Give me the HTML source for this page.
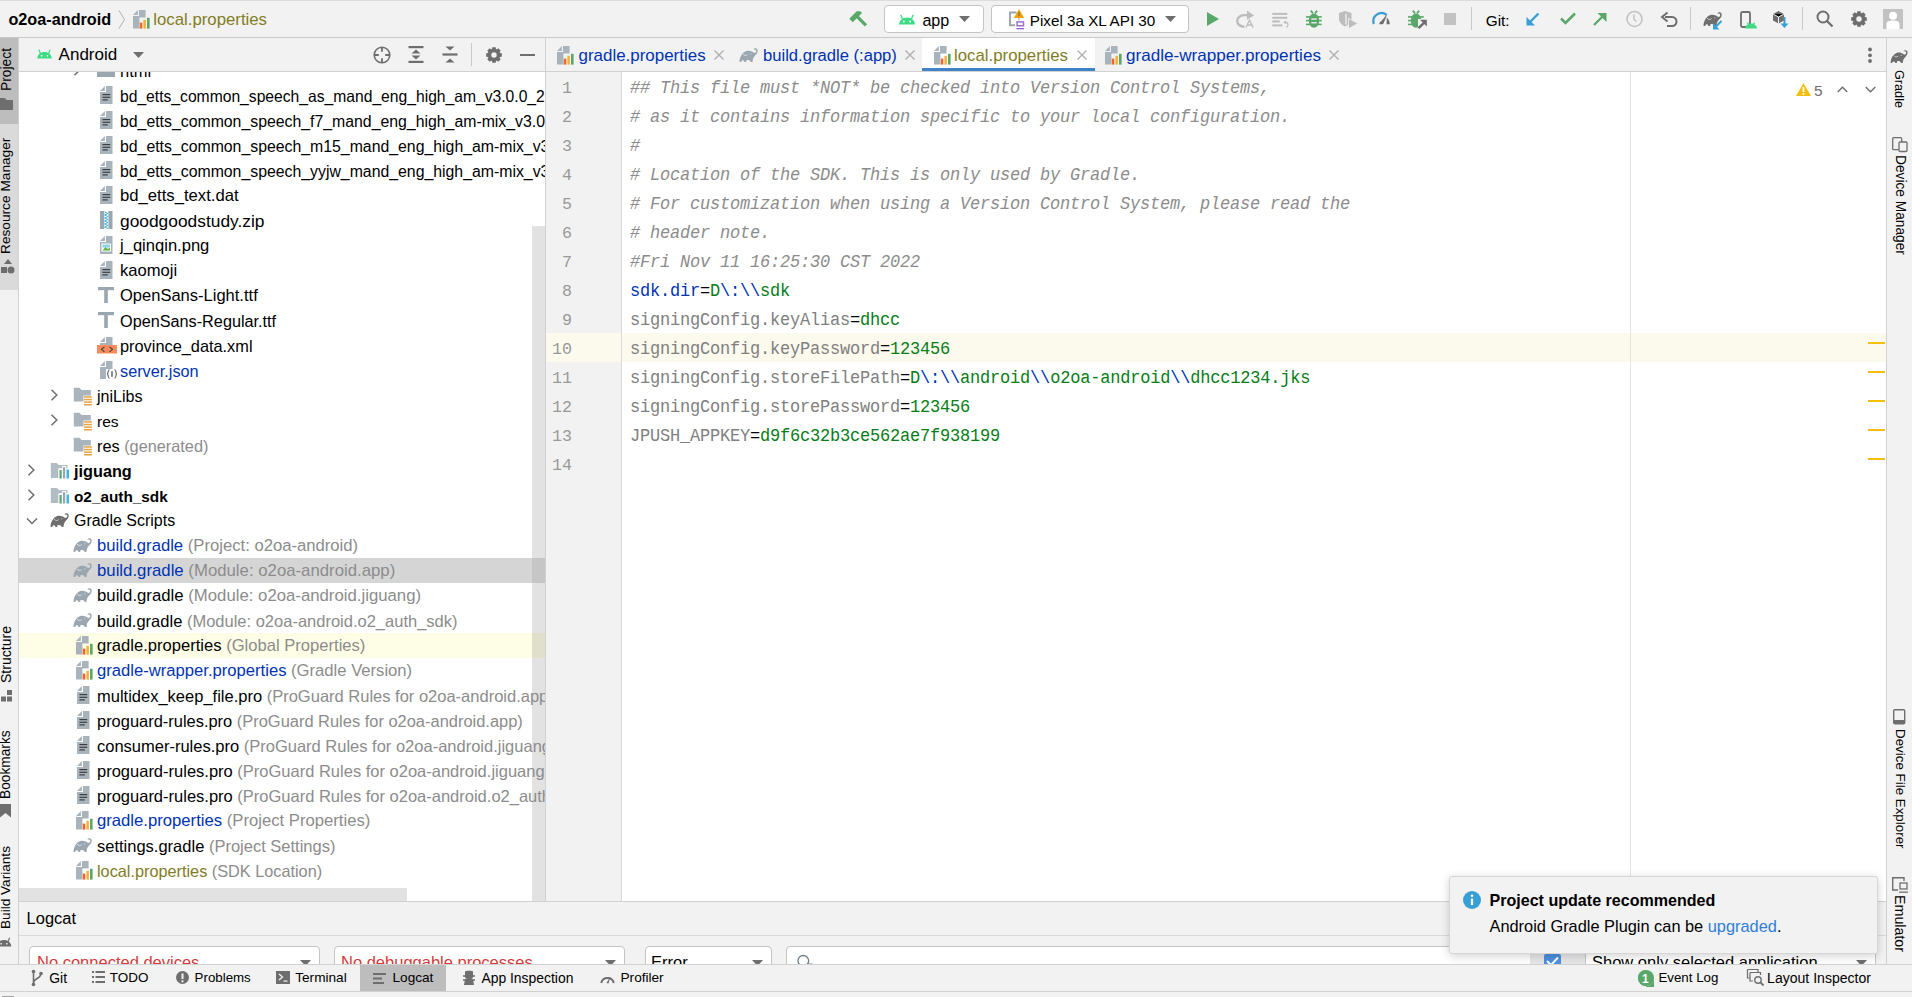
<!DOCTYPE html>
<html><head><meta charset="utf-8">
<style>
*{margin:0;padding:0;box-sizing:border-box}
html,body{width:1912px;height:997px;overflow:hidden;background:#f2f2f2;font-family:"Liberation Sans",sans-serif;font-size:17px;color:#000}
.a{position:absolute}
.t{position:absolute;white-space:nowrap}
svg{position:absolute;overflow:visible}
.vt{position:absolute;white-space:nowrap;transform-origin:0 0;font-family:"Liberation Sans",sans-serif}
</style></head><body>
<!-- top toolbar -->
<div class="a" style="left:0;top:0;width:1912px;height:1px;background:#dcdcdc"></div>
<div class="a" style="left:0;top:37px;width:1912px;height:1px;background:#c9c9c9"></div>
<!-- left strip -->
<div class="a" style="left:0;top:38px;width:18px;height:86px;background:#bdbdbd"></div>
<div class="a" style="left:0;top:124px;width:18px;height:166px;background:#dadada"></div>
<div class="a" style="left:18px;top:38px;width:1px;height:926px;background:#d1d1d1"></div>
<!-- right strip -->
<div class="a" style="left:1886px;top:38px;width:1px;height:926px;background:#d1d1d1"></div>
<!-- project panel header border -->
<div class="a" style="left:19px;top:71px;width:1867px;height:1px;background:#d1d1d1"></div>
<!-- tree bg -->
<div class="a" style="left:19px;top:72px;width:526px;height:829px;background:#fff"></div>
<!-- panel separator -->
<div class="a" style="left:545px;top:38px;width:1px;height:863px;background:#d1d1d1"></div>
<!-- editor gutter -->
<div class="a" style="left:546px;top:72px;width:75px;height:829px;background:#f2f2f2"></div>
<div class="a" style="left:621px;top:72px;width:1px;height:829px;background:#d9d9d9"></div>
<!-- code bg -->
<div class="a" style="left:622px;top:72px;width:1264px;height:829px;background:#fff"></div>
<!-- right margin -->
<div class="a" style="left:1630px;top:72px;width:1px;height:829px;background:#e4e4e4"></div>
<!-- bottom border of main area -->
<div class="a" style="left:19px;top:901px;width:1867px;height:1px;background:#d1d1d1"></div>
<div class="a" style="left:19px;top:935px;width:1867px;height:1px;background:#d9d9d9"></div>
<!-- bottom toolbar -->
<div class="a" style="left:0;top:964px;width:1912px;height:1px;background:#d1d1d1"></div>
<div class="a" style="left:0;top:991px;width:1912px;height:1px;background:#d1d1d1"></div>
<div class="t" style="left:8.4px;top:4.37px;font-size:16.24px;line-height:30px;height:30px;color:#000;font-family:'Liberation Sans';font-weight:bold">o2oa-android</div>
<svg style="left:118px;top:10px" width="8" height="19" viewBox="0 0 8 19"><path d="M1 0.5L6.5 9.5L1 18.5" stroke="#b0b0b0" stroke-width="1" fill="none"/></svg>
<svg style="left:133px;top:10px" width="17" height="19" viewBox="0 0 17 19"><path d="M6 0H12.6V7.4H6.4V18.6H0V6H6Z" fill="#a9b3bb"/><path d="M0 4.9L4.9 0V4.9Z" fill="#a9b3bb"/><rect x="6.8" y="12.6" width="2.5" height="6" fill="#f26522"/><rect x="10.4" y="9.8" width="2.5" height="8.8" fill="#f4af3d"/><rect x="14" y="7.8" width="2.6" height="10.8" fill="#59a869"/></svg>
<div class="t" style="left:153.3px;top:5.19px;font-size:16.77px;line-height:30px;height:30px;color:#827d25;font-family:'Liberation Sans'">local.properties</div>
<svg style="left:850px;top:10px" width="19" height="18" viewBox="0 0 19 18"><g transform="rotate(-45 9.5 9)"><rect x="8" y="5" width="3.2" height="13" fill="#59a869"/><path d="M2.5 1.5H13L15.5 4V6.5H2.5Z" fill="#59a869"/></g></svg>
<div class="a" style="left:884px;top:5px;width:100px;height:28px;background:#fff;border:1px solid #c4c4c4;border-radius:4px"></div>
<svg style="left:899px;top:14px" width="16" height="11" viewBox="0 0 16 11"><path d="M0 10.5C0.3 6.3 3.5 3.4 8 3.4C12.5 3.4 15.7 6.3 16 10.5Z" fill="#3ddc84"/><path d="M3.6 5.2L1.8 0.8M12.4 5.2L14.2 0.8" stroke="#3ddc84" stroke-width="1.3"/><circle cx="4.8" cy="7.5" r="0.9" fill="#fff"/><circle cx="11.2" cy="7.5" r="0.9" fill="#fff"/></svg>
<div class="t" style="left:922.4px;top:5.42px;font-size:16.11px;line-height:30px;height:30px;color:#000;font-family:'Liberation Sans'">app</div>
<svg style="left:959px;top:16px" width="11" height="6" viewBox="0 0 11 6"><path d="M0 0H11L5.5 6Z" fill="#6e6e6e"/></svg>
<div class="a" style="left:991px;top:5px;width:198px;height:28px;background:#fff;border:1px solid #c4c4c4;border-radius:4px"></div>
<svg style="left:1008px;top:8px" width="18" height="22" viewBox="0 0 18 22"><path d="M8.5 4.5H2V17.2H7" stroke="#9aa7b0" stroke-width="1.9" fill="none"/><path d="M11 1L16.2 10H5.8Z" fill="#f0a30a"/><rect x="10.4" y="4" width="1.2" height="4.2" fill="#8a6d3b"/><rect x="10.4" y="10" width="1.1" height="2.3" fill="#9aa7b0"/><rect x="9.1" y="13.9" width="6.4" height="3.9" stroke="#9c6fd0" stroke-width="1.5" fill="none"/><rect x="8.4" y="20" width="7.6" height="1.3" fill="#8e5fc8"/></svg>
<div class="t" style="left:1029.8px;top:5.73px;font-size:15.22px;line-height:30px;height:30px;color:#000;font-family:'Liberation Sans'">Pixel 3a XL API 30</div>
<svg style="left:1165px;top:16px" width="11" height="6" viewBox="0 0 11 6"><path d="M0 0H11L5.5 6Z" fill="#6e6e6e"/></svg>
<svg style="left:1207px;top:12px" width="12" height="14" viewBox="0 0 12 14"><path d="M0 0L12 7L0 14Z" fill="#59a869"/></svg>
<svg style="left:1236px;top:10px" width="20" height="20" viewBox="0 0 20 20"><path d="M11.5 5.1H8C4 5.1 1.2 8 1.2 11C1.2 14 4 16.7 8.4 16.7" stroke="#bdbdbd" stroke-width="2.4" fill="none"/><path d="M11 0.4L18.1 5.4L11 9.8Z" fill="#bdbdbd"/><path d="M10 17.6L13.5 10.1L17.1 17.6M11.3 15H15.7" stroke="#bdbdbd" stroke-width="1.3" fill="none"/></svg>
<svg style="left:1272px;top:12px" width="18" height="18" viewBox="0 0 18 18"><rect x="0.3" y="0.9" width="15" height="2" fill="#bdbdbd"/><rect x="0.3" y="4.8" width="15" height="2" fill="#bdbdbd"/><rect x="0.3" y="8.4" width="7.5" height="2.1" fill="#bdbdbd"/><rect x="0.3" y="12.4" width="10.2" height="2" fill="#bdbdbd"/><path d="M12.5 10.4C15 9.8 16.5 11.5 15.8 13.5L14.5 15.6" stroke="#bdbdbd" stroke-width="1.3" fill="none"/><path d="M11.2 10.4L14 8.5L14 12.3Z" fill="#bdbdbd"/></svg>
<svg style="left:1306px;top:10px" width="16" height="18" viewBox="0 0 16 18"><ellipse cx="8" cy="10.6" rx="5.2" ry="7.2" fill="#59a869"/><path d="M4.8 0.6L7 3.4M11.2 0.6L9 3.4" stroke="#59a869" stroke-width="1.7"/><rect x="0" y="6.1" width="15.7" height="1.6" fill="#59a869"/><rect x="0" y="9.8" width="15.7" height="1.6" fill="#59a869"/><rect x="0" y="13.6" width="15.7" height="1.6" fill="#59a869"/><rect x="5.3" y="8.4" width="5.4" height="1.3" fill="#f2f2f2"/><rect x="5.3" y="12.1" width="5.4" height="1.3" fill="#f2f2f2"/></svg>
<svg style="left:1338px;top:10px" width="20" height="20" viewBox="0 0 20 20"><path d="M1 3L6.8 1L13.5 3V8.5C13.5 12 11 14.5 7 16.5C3 14.5 1 12 1 8.5Z" fill="#bdbdbd"/><path d="M8 4V14.5" stroke="#f2f2f2" stroke-width="1.3"/><path d="M10.5 8.2L19.8 13.5L10.5 18.8Z" fill="#bdbdbd" stroke="#f2f2f2" stroke-width="0.8"/></svg>
<svg style="left:1372px;top:13px" width="20" height="12" viewBox="0 0 20 12"><path d="M1.8 11A8.2 8.2 0 0 1 14.6 1.8" stroke="#389fd6" stroke-width="2.3" fill="none"/><path d="M7.4 11.2C7.2 9.5 8.2 8.6 9.2 8.2L15.5 0.8L11.6 10.2C11.2 11 10.4 11.2 10 11.2Z" fill="#6e6e6e"/><path d="M14.8 4.5C16.8 6.5 17.8 9 17.8 11.2H14.6Z" fill="#6e6e6e"/></svg>
<svg style="left:1408px;top:10px" width="20" height="20" viewBox="0 0 20 20"><clipPath id="adc"><path d="M0 0H20V9H10V20H0Z"/></clipPath><g clip-path="url(#adc)"><ellipse cx="8" cy="10.6" rx="5.2" ry="7.2" fill="#59a869"/><path d="M4.8 0.6L7 3.4M11.2 0.6L9 3.4" stroke="#59a869" stroke-width="1.7"/><rect x="0" y="6.1" width="15.7" height="1.6" fill="#59a869"/><rect x="0" y="9.8" width="15.7" height="1.6" fill="#59a869"/><rect x="0" y="13.6" width="15.7" height="1.6" fill="#59a869"/></g><path d="M10.5 18.2L17 11.8" stroke="#6e6e6e" stroke-width="2.4"/><path d="M12 9.8H18.8V16.6Z" fill="#6e6e6e"/></svg>
<div class="a" style="left:1444px;top:13px;width:12px;height:12px;background:#c2c2c2;"></div>
<div class="a" style="left:1471px;top:7px;width:1px;height:23px;background:#c9c9c9;"></div>
<div class="t" style="left:1485.7px;top:5.67px;font-size:15.37px;line-height:30px;height:30px;color:#000;font-family:'Liberation Sans'">Git:</div>
<svg style="left:1526px;top:12px" width="14" height="14" viewBox="0 0 14 14"><path d="M12.5 1.5L3 11" stroke="#389fd6" stroke-width="2.4"/><path d="M0.5 5V13.5H9Z" fill="#389fd6"/></svg>
<svg style="left:1560px;top:12px" width="16" height="13" viewBox="0 0 16 13"><path d="M1 6.5L5.5 11L15 1.5" stroke="#59a869" stroke-width="2.5" fill="none"/></svg>
<svg style="left:1593px;top:12px" width="14" height="14" viewBox="0 0 14 14"><path d="M1 13L10.5 3.5" stroke="#59a869" stroke-width="2.3"/><path d="M4.5 1H13.5V10Z" fill="#59a869"/></svg>
<svg style="left:1626px;top:10px" width="17" height="18" viewBox="0 0 17 18"><circle cx="8.5" cy="9" r="7.5" stroke="#c2c2c2" stroke-width="1.6" fill="none"/><path d="M8 4.5V9.5L10.5 11.5" stroke="#c2c2c2" stroke-width="1.5" fill="none"/></svg>
<svg style="left:1661px;top:11px" width="17" height="16" viewBox="0 0 17 16"><path d="M4 6H11A4.5 4.5 0 0 1 11 15H6" stroke="#6e6e6e" stroke-width="2" fill="none"/><path d="M6.5 1.5L1 6L6.5 10.5" stroke="#6e6e6e" stroke-width="2" fill="none"/></svg>
<div class="a" style="left:1690px;top:7px;width:1px;height:23px;background:#c9c9c9;"></div>
<svg style="left:1703px;top:12px" width="19" height="14" viewBox="0 0 18.5 14"><path d="M0.3 14C0.2 9.5 2.5 5 6.5 3.2C9.5 2.2 12 3 14.2 4.6C15.5 5.4 17 4.6 17 3C17 1.6 15.6 1.2 14.2 1.6C14.6 0.2 17 -0.3 18.1 1.2C18.9 2.5 18.4 5 16.8 6.6C15.2 8.2 13.6 9.6 13.3 14H11.5C11.1 12.4 9.4 11.4 7.2 12.2L6.9 14H5.3C4.8 12.2 3 11.9 2.2 13L2 14Z" fill="#6e6e6e"/><path d="M3.6 5.8C4.8 7.8 7 8 8.4 6.6" stroke="#fff" stroke-width="0.8" fill="none" opacity="0.75"/><circle cx="11.6" cy="5.8" r="0.6" fill="#fff" opacity="0.6"/></svg>
<svg style="left:1713px;top:20px" width="10" height="10" viewBox="0 0 10 10"><path d="M8.5 1L3 6.5" stroke="#389fd6" stroke-width="2"/><path d="M0 3V9.5H6.5Z" fill="#389fd6"/></svg>
<svg style="left:1740px;top:11px" width="16" height="18" viewBox="0 0 16 18"><rect x="1" y="1" width="9" height="15" rx="1.5" stroke="#6e6e6e" stroke-width="1.8" fill="none"/><path d="M5 17.5C5.5 14 8 12.5 11 12.5C14 12.5 16.5 14 17 17.5Z" fill="#3ddc84"/><path d="M8.5 13.3L7.3 11.5M13.5 13.3L14.7 11.5" stroke="#3ddc84" stroke-width="1.2"/></svg>
<svg style="left:1772px;top:10px" width="20" height="20" viewBox="0 0 20 20"><path d="M1 4L6.5 1L12 4V10.5L6.5 13.5L1 10.5Z" fill="#6e6e6e"/><path d="M1 4L6.5 7L12 4M6.5 7V13.5" stroke="#f2f2f2" stroke-width="1"/><path d="M12.5 7V17" stroke="#389fd6" stroke-width="2"/><path d="M8.5 13.5H16.5L12.5 18Z" fill="#389fd6"/></svg>
<div class="a" style="left:1802px;top:7px;width:1px;height:23px;background:#c9c9c9;"></div>
<svg style="left:1816px;top:10px" width="18" height="18" viewBox="0 0 18 18"><circle cx="7" cy="7" r="5.5" stroke="#6e6e6e" stroke-width="2" fill="none"/><path d="M11 11L16.5 16.5" stroke="#6e6e6e" stroke-width="2.3"/></svg>
<svg style="left:1851px;top:11px" width="16" height="16" viewBox="0 0 16 16"><path d="M13.41 6.01 L15.81 6.25 L15.81 9.75 L13.41 9.99 L13.23 10.42 L14.76 12.29 L12.29 14.76 L10.42 13.23 L9.99 13.41 L9.75 15.81 L6.25 15.81 L6.01 13.41 L5.58 13.23 L3.71 14.76 L1.24 12.29 L2.77 10.42 L2.59 9.99 L0.19 9.75 L0.19 6.25 L2.59 6.01 L2.77 5.58 L1.24 3.71 L3.71 1.24 L5.58 2.77 L6.01 2.59 L6.25 0.19 L9.75 0.19 L9.99 2.59 L10.42 2.77 L12.29 1.24 L14.76 3.71 L13.23 5.58Z" fill="#6e6e6e"/><circle cx="8.0" cy="8.0" r="6.24" fill="#6e6e6e"/><circle cx="8.0" cy="8.0" r="2.72" fill="#f2f2f2"/></svg>
<svg style="left:1883px;top:9px" width="20" height="20" viewBox="0 0 20 20"><rect width="20" height="20" fill="#c2c2c2"/><circle cx="10" cy="6.8" r="4" fill="#fff"/><path d="M3.5 20V15C3.5 12.5 6 11.5 10 11.5C14 11.5 16.5 12.5 16.5 15V20Z" fill="#fff"/></svg>
<svg style="left:37px;top:49px" width="15" height="10" viewBox="0 0 16 11"><path d="M0 10.5C0.3 6.3 3.5 3.4 8 3.4C12.5 3.4 15.7 6.3 16 10.5Z" fill="#3ddc84"/><path d="M3.6 5.2L1.8 0.8M12.4 5.2L14.2 0.8" stroke="#3ddc84" stroke-width="1.3"/><circle cx="4.8" cy="7.5" r="0.9" fill="#fff"/><circle cx="11.2" cy="7.5" r="0.9" fill="#fff"/></svg>
<div class="t" style="left:58.6px;top:40.11px;font-size:17.01px;line-height:30px;height:30px;color:#000;font-family:'Liberation Sans'">Android</div>
<svg style="left:133px;top:52px" width="11" height="6" viewBox="0 0 11 6"><path d="M0 0H11L5.5 6Z" fill="#6e6e6e"/></svg>
<svg style="left:373px;top:46px" width="18" height="18" viewBox="0 0 18 18"><circle cx="9" cy="9" r="7.8" stroke="#6e6e6e" stroke-width="1.6" fill="none"/><path d="M9 1.2V5.8M9 12.2V16.8M1.2 9H5.8M12.2 9H16.8" stroke="#6e6e6e" stroke-width="1.8"/></svg>
<svg style="left:408px;top:46px" width="16" height="17" viewBox="0 0 16 17"><rect x="0.5" y="0" width="15" height="2.2" fill="#6e6e6e"/><rect x="0.5" y="14.8" width="15" height="2.2" fill="#6e6e6e"/><path d="M3.5 7.5L8 3.5L12.5 7.5Z" fill="#6e6e6e"/><path d="M3.5 9.5L8 13.5L12.5 9.5Z" fill="#6e6e6e"/></svg>
<svg style="left:442px;top:46px" width="16" height="17" viewBox="0 0 16 17"><rect x="0.5" y="7.4" width="15" height="2.2" fill="#6e6e6e"/><path d="M3.5 0.5H12.5L8 4.5Z" fill="#6e6e6e"/><path d="M3.5 16.5H12.5L8 12.5Z" fill="#6e6e6e"/></svg>
<div class="a" style="left:471px;top:43px;width:1px;height:23px;background:#c9c9c9;"></div>
<svg style="left:486px;top:47px" width="16" height="16" viewBox="0 0 16 16"><path d="M13.41 6.01 L15.81 6.25 L15.81 9.75 L13.41 9.99 L13.23 10.42 L14.76 12.29 L12.29 14.76 L10.42 13.23 L9.99 13.41 L9.75 15.81 L6.25 15.81 L6.01 13.41 L5.58 13.23 L3.71 14.76 L1.24 12.29 L2.77 10.42 L2.59 9.99 L0.19 9.75 L0.19 6.25 L2.59 6.01 L2.77 5.58 L1.24 3.71 L3.71 1.24 L5.58 2.77 L6.01 2.59 L6.25 0.19 L9.75 0.19 L9.99 2.59 L10.42 2.77 L12.29 1.24 L14.76 3.71 L13.23 5.58Z" fill="#6e6e6e"/><circle cx="8.0" cy="8.0" r="6.24" fill="#6e6e6e"/><circle cx="8.0" cy="8.0" r="2.72" fill="#f2f2f2"/></svg>
<div class="a" style="left:520px;top:54px;width:15px;height:2.2px;background:#6e6e6e;"></div>
<svg style="left:557px;top:46px" width="17" height="19" viewBox="0 0 17 19"><path d="M6 0H12.6V7.4H6.4V18.6H0V6H6Z" fill="#a9b3bb"/><path d="M0 4.9L4.9 0V4.9Z" fill="#a9b3bb"/><rect x="6.8" y="12.6" width="2.5" height="6" fill="#f26522"/><rect x="10.4" y="9.8" width="2.5" height="8.8" fill="#f4af3d"/><rect x="14" y="7.8" width="2.6" height="10.8" fill="#59a869"/></svg>
<div class="t" style="left:578.5px;top:41.13px;font-size:16.95px;line-height:30px;height:30px;color:#0033b3;font-family:'Liberation Sans'">gradle.properties</div>
<svg style="left:714px;top:50px" width="10" height="10" viewBox="0 0 10 10"><path d="M0.5 0.5L9.5 9.5M9.5 0.5L0.5 9.5" stroke="#adadad" stroke-width="1.3"/></svg>
<svg style="left:739px;top:48px" width="19" height="14" viewBox="0 0 18.5 14"><path d="M0.3 14C0.2 9.5 2.5 5 6.5 3.2C9.5 2.2 12 3 14.2 4.6C15.5 5.4 17 4.6 17 3C17 1.6 15.6 1.2 14.2 1.6C14.6 0.2 17 -0.3 18.1 1.2C18.9 2.5 18.4 5 16.8 6.6C15.2 8.2 13.6 9.6 13.3 14H11.5C11.1 12.4 9.4 11.4 7.2 12.2L6.9 14H5.3C4.8 12.2 3 11.9 2.2 13L2 14Z" fill="#9aa7b0"/><path d="M3.6 5.8C4.8 7.8 7 8 8.4 6.6" stroke="#fff" stroke-width="0.8" fill="none" opacity="0.75"/><circle cx="11.6" cy="5.8" r="0.6" fill="#fff" opacity="0.6"/></svg>
<div class="t" style="left:763.0px;top:41.24px;font-size:16.63px;line-height:30px;height:30px;color:#0033b3;font-family:'Liberation Sans'">build.gradle (:app)</div>
<svg style="left:905px;top:50px" width="10" height="10" viewBox="0 0 10 10"><path d="M0.5 0.5L9.5 9.5M9.5 0.5L0.5 9.5" stroke="#adadad" stroke-width="1.3"/></svg>
<div class="a" style="left:922px;top:38px;width:173px;height:30px;background:#fff;"></div>
<div class="a" style="left:922px;top:68px;width:173px;height:3px;background:#4083c9;"></div>
<svg style="left:934px;top:46px" width="17" height="19" viewBox="0 0 17 19"><path d="M6 0H12.6V7.4H6.4V18.6H0V6H6Z" fill="#a9b3bb"/><path d="M0 4.9L4.9 0V4.9Z" fill="#a9b3bb"/><rect x="6.8" y="12.6" width="2.5" height="6" fill="#f26522"/><rect x="10.4" y="9.8" width="2.5" height="8.8" fill="#f4af3d"/><rect x="14" y="7.8" width="2.6" height="10.8" fill="#59a869"/></svg>
<div class="t" style="left:954.0px;top:41.18px;font-size:16.81px;line-height:30px;height:30px;color:#827d25;font-family:'Liberation Sans'">local.properties</div>
<svg style="left:1077px;top:50px" width="10" height="10" viewBox="0 0 10 10"><path d="M0.5 0.5L9.5 9.5M9.5 0.5L0.5 9.5" stroke="#adadad" stroke-width="1.3"/></svg>
<svg style="left:1105px;top:46px" width="17" height="19" viewBox="0 0 17 19"><path d="M6 0H12.6V7.4H6.4V18.6H0V6H6Z" fill="#a9b3bb"/><path d="M0 4.9L4.9 0V4.9Z" fill="#a9b3bb"/><rect x="6.8" y="12.6" width="2.5" height="6" fill="#f26522"/><rect x="10.4" y="9.8" width="2.5" height="8.8" fill="#f4af3d"/><rect x="14" y="7.8" width="2.6" height="10.8" fill="#59a869"/></svg>
<div class="t" style="left:1126.0px;top:41.07px;font-size:17.11px;line-height:30px;height:30px;color:#0033b3;font-family:'Liberation Sans'">gradle-wrapper.properties</div>
<svg style="left:1329px;top:50px" width="10" height="10" viewBox="0 0 10 10"><path d="M0.5 0.5L9.5 9.5M9.5 0.5L0.5 9.5" stroke="#adadad" stroke-width="1.3"/></svg>
<svg style="left:1867px;top:47px" width="6" height="17" viewBox="0 0 6 17"><circle cx="3" cy="2.5" r="1.9" fill="#6e6e6e"/><circle cx="3" cy="8.3" r="1.9" fill="#6e6e6e"/><circle cx="3" cy="14" r="1.9" fill="#6e6e6e"/></svg>
<div class="a" style="left:19px;top:72px;width:526px;height:829px;overflow:hidden">
<div class="a" style="left:0px;top:486px;width:526px;height:25px;background:#d5d5d5;"></div>
<div class="a" style="left:0px;top:561px;width:526px;height:25px;background:#fefee6;"></div>
<div class="a" style="left:513px;top:154px;width:13px;height:675px;background:#e2e2e2;"></div>
<div class="a" style="left:513px;top:561px;width:13px;height:25px;background:#e0dfcc;"></div>
<div class="a" style="left:513px;top:486px;width:13px;height:25px;background:#c6c6c6;"></div>
<div class="a" style="left:0px;top:816px;width:388px;height:13px;background:#e2e2e2;"></div>
<svg style="left:78px;top:-10px" width="18" height="15" viewBox="0 0 18 15"><path d="M0 0H7L9 2H18V15H0Z" fill="#9aa7b0"/></svg>
<svg style="left:55px;top:-8px" width="8" height="12" viewBox="0 0 8 12"><path d="M0.5 0.8L5.8 6L0.5 11.2" stroke="#6e6e6e" stroke-width="1.5" fill="none"/></svg>
<div class="t" style="left:101px;top:-15.72px;font-size:16.5px;line-height:30px;height:30px;color:#000;font-family:'Liberation Sans'"><span style="color:#000">html</span></div>
<svg style="left:81px;top:14px" width="13" height="18" viewBox="0 0 13 18"><path d="M6 0H12.5V18H0V6H6Z" fill="#a9b3bb"/><path d="M0 4.9L4.9 0V4.9Z" fill="#a9b3bb"/><rect x="2.4" y="8" width="7.8" height="1.2" fill="#3c3f41"/><rect x="2.4" y="10.7" width="7.8" height="1.2" fill="#3c3f41"/><rect x="2.4" y="13.3" width="5.4" height="1.2" fill="#3c3f41"/></svg>
<div class="t" style="left:101px;top:9.57px;font-size:15.67px;line-height:30px;height:30px;color:#000;font-family:'Liberation Sans'"><span style="color:#000">bd_etts_common_speech_as_mand_eng_high_am_v3.0.0_20210721.dat</span></div>
<svg style="left:81px;top:39px" width="13" height="18" viewBox="0 0 13 18"><path d="M6 0H12.5V18H0V6H6Z" fill="#a9b3bb"/><path d="M0 4.9L4.9 0V4.9Z" fill="#a9b3bb"/><rect x="2.4" y="8" width="7.8" height="1.2" fill="#3c3f41"/><rect x="2.4" y="10.7" width="7.8" height="1.2" fill="#3c3f41"/><rect x="2.4" y="13.3" width="5.4" height="1.2" fill="#3c3f41"/></svg>
<div class="t" style="left:101px;top:34.51px;font-size:15.83px;line-height:30px;height:30px;color:#000;font-family:'Liberation Sans'"><span style="color:#000">bd_etts_common_speech_f7_mand_eng_high_am-mix_v3.0.0_20210721.dat</span></div>
<svg style="left:81px;top:64px" width="13" height="18" viewBox="0 0 13 18"><path d="M6 0H12.5V18H0V6H6Z" fill="#a9b3bb"/><path d="M0 4.9L4.9 0V4.9Z" fill="#a9b3bb"/><rect x="2.4" y="8" width="7.8" height="1.2" fill="#3c3f41"/><rect x="2.4" y="10.7" width="7.8" height="1.2" fill="#3c3f41"/><rect x="2.4" y="13.3" width="5.4" height="1.2" fill="#3c3f41"/></svg>
<div class="t" style="left:101px;top:59.51px;font-size:15.84px;line-height:30px;height:30px;color:#000;font-family:'Liberation Sans'"><span style="color:#000">bd_etts_common_speech_m15_mand_eng_high_am-mix_v3.0.0_20210721.dat</span></div>
<svg style="left:81px;top:89px" width="13" height="18" viewBox="0 0 13 18"><path d="M6 0H12.5V18H0V6H6Z" fill="#a9b3bb"/><path d="M0 4.9L4.9 0V4.9Z" fill="#a9b3bb"/><rect x="2.4" y="8" width="7.8" height="1.2" fill="#3c3f41"/><rect x="2.4" y="10.7" width="7.8" height="1.2" fill="#3c3f41"/><rect x="2.4" y="13.3" width="5.4" height="1.2" fill="#3c3f41"/></svg>
<div class="t" style="left:101px;top:84.51px;font-size:15.84px;line-height:30px;height:30px;color:#000;font-family:'Liberation Sans'"><span style="color:#000">bd_etts_common_speech_yyjw_mand_eng_high_am-mix_v3.0.0_20210721.dat</span></div>
<svg style="left:81px;top:114px" width="13" height="18" viewBox="0 0 13 18"><path d="M6 0H12.5V18H0V6H6Z" fill="#a9b3bb"/><path d="M0 4.9L4.9 0V4.9Z" fill="#a9b3bb"/><rect x="2.4" y="8" width="7.8" height="1.2" fill="#3c3f41"/><rect x="2.4" y="10.7" width="7.8" height="1.2" fill="#3c3f41"/><rect x="2.4" y="13.3" width="5.4" height="1.2" fill="#3c3f41"/></svg>
<div class="t" style="left:101px;top:109.22px;font-size:16.68px;line-height:30px;height:30px;color:#000;font-family:'Liberation Sans'"><span style="color:#000">bd_etts_text.dat</span></div>
<svg style="left:81px;top:139px" width="13" height="18" viewBox="0 0 13 18"><path d="M0 0H12.5V18H0Z" fill="#9aa7b0"/><rect x="4.2" y="0" width="4.2" height="18" fill="#fff"/><path d="M4.5 1L8 2.5L4.5 4L8 5.5L4.5 7L8 8.5L4.5 10L8 11.5L4.5 13L8 14.5L4.5 16L8 17.5" stroke="#40b6e0" stroke-width="1" fill="none"/></svg>
<div class="t" style="left:101px;top:133.98px;font-size:17.37px;line-height:30px;height:30px;color:#000;font-family:'Liberation Sans'"><span style="color:#000">goodgoodstudy.zip</span></div>
<svg style="left:81px;top:164px" width="13" height="18" viewBox="0 0 13 18"><path d="M6 0H12.5V18H0V6H6Z" fill="#a9b3bb"/><path d="M0 4.9L4.9 0V4.9Z" fill="#a9b3bb"/><rect x="1.5" y="7.5" width="9.5" height="8" fill="#fff"/><path d="M2.5 14.5L5.5 11L8 13L10 11.5V14.5Z" fill="#62b543"/><rect x="2.5" y="8.5" width="7.5" height="3" fill="#40b6e0" opacity="0.6"/></svg>
<div class="t" style="left:101px;top:159.26px;font-size:16.57px;line-height:30px;height:30px;color:#000;font-family:'Liberation Sans'"><span style="color:#000">j_qinqin.png</span></div>
<svg style="left:81px;top:189px" width="13" height="18" viewBox="0 0 13 18"><path d="M6 0H12.5V18H0V6H6Z" fill="#a9b3bb"/><path d="M0 4.9L4.9 0V4.9Z" fill="#a9b3bb"/><rect x="2.4" y="8" width="7.8" height="1.2" fill="#3c3f41"/><rect x="2.4" y="10.7" width="7.8" height="1.2" fill="#3c3f41"/><rect x="2.4" y="13.3" width="5.4" height="1.2" fill="#3c3f41"/></svg>
<div class="t" style="left:101px;top:184.25px;font-size:16.6px;line-height:30px;height:30px;color:#000;font-family:'Liberation Sans'"><span style="color:#000">kaomoji</span></div>
<svg style="left:79px;top:215px" width="16" height="16" viewBox="0 0 16 16"><rect x="0" y="0" width="16" height="3.2" fill="#9aa7b0"/><rect x="6.2" y="0" width="3.6" height="16" fill="#9aa7b0"/></svg>
<div class="t" style="left:101px;top:209.28px;font-size:16.52px;line-height:30px;height:30px;color:#000;font-family:'Liberation Sans'"><span style="color:#000">OpenSans-Light.ttf</span></div>
<svg style="left:79px;top:240px" width="16" height="16" viewBox="0 0 16 16"><rect x="0" y="0" width="16" height="3.2" fill="#9aa7b0"/><rect x="6.2" y="0" width="3.6" height="16" fill="#9aa7b0"/></svg>
<div class="t" style="left:101px;top:234.37px;font-size:16.24px;line-height:30px;height:30px;color:#000;font-family:'Liberation Sans'"><span style="color:#000">OpenSans-Regular.ttf</span></div>
<svg style="left:78px;top:265px" width="20" height="18" viewBox="0 0 20 18"><path d="M9 0H15.5V8H3V6H9Z" fill="#a9b3bb"/><path d="M3 4.9L7.9 0V4.9Z" fill="#a9b3bb"/><rect x="0" y="8" width="20" height="8.5" fill="#f98b5b"/><path d="M7.5 9.8L4.5 12.3L7.5 14.8M12.5 9.8L15.5 12.3L12.5 14.8" stroke="#3c3f41" stroke-width="1.1" fill="none"/></svg>
<div class="t" style="left:101px;top:259.34px;font-size:16.33px;line-height:30px;height:30px;color:#000;font-family:'Liberation Sans'"><span style="color:#000">province_data.xml</span></div>
<svg style="left:81px;top:289px" width="18" height="18" viewBox="0 0 18 18"><path d="M6 0H12.5V8H6V18H0V6H6Z" fill="#a9b3bb"/><path d="M0 4.9L4.9 0V4.9Z" fill="#a9b3bb"/><path d="M9.5 8.5C8 8.5 8.5 11 7.5 12.8C8.5 14.6 8 17.5 9.5 17.5M14.5 8.5C16 8.5 15.5 11 16.5 12.8C15.5 14.6 16 17.5 14.5 17.5" stroke="#6e6e6e" stroke-width="1.2" fill="none"/><rect x="11.2" y="10" width="1.6" height="6" rx="0.8" fill="#6e6e6e"/></svg>
<div class="t" style="left:101px;top:284.37px;font-size:16.26px;line-height:30px;height:30px;color:#000;font-family:'Liberation Sans'"><span style="color:#0033b3">server.json</span></div>
<svg style="left:54px;top:315px" width="20" height="19" viewBox="0 0 20 19"><path d="M0.8 0.8H6.5L8.5 3H17.8V8.5H10.5V14.5H0.8Z" fill="#aab4bc"/><rect x="11" y="9.2" width="7.8" height="1.5" fill="#e6a23c"/><rect x="11" y="11.8" width="7.8" height="1.5" fill="#e6a23c"/><rect x="11" y="14.4" width="7.8" height="1.5" fill="#e6a23c"/><rect x="11" y="17" width="7.8" height="1.5" fill="#e6a23c"/></svg>
<svg style="left:32px;top:317px" width="8" height="12" viewBox="0 0 8 12"><path d="M0.5 0.8L5.8 6L0.5 11.2" stroke="#6e6e6e" stroke-width="1.5" fill="none"/></svg>
<div class="t" style="left:78px;top:309.43px;font-size:16.08px;line-height:30px;height:30px;color:#000;font-family:'Liberation Sans'"><span style="color:#000">jniLibs</span></div>
<svg style="left:54px;top:340px" width="20" height="19" viewBox="0 0 20 19"><path d="M0.8 0.8H6.5L8.5 3H17.8V8.5H10.5V14.5H0.8Z" fill="#aab4bc"/><rect x="11" y="9.2" width="7.8" height="1.5" fill="#e6a23c"/><rect x="11" y="11.8" width="7.8" height="1.5" fill="#e6a23c"/><rect x="11" y="14.4" width="7.8" height="1.5" fill="#e6a23c"/><rect x="11" y="17" width="7.8" height="1.5" fill="#e6a23c"/></svg>
<svg style="left:32px;top:342px" width="8" height="12" viewBox="0 0 8 12"><path d="M0.5 0.8L5.8 6L0.5 11.2" stroke="#6e6e6e" stroke-width="1.5" fill="none"/></svg>
<div class="t" style="left:78px;top:334.62px;font-size:15.54px;line-height:30px;height:30px;color:#000;font-family:'Liberation Sans'"><span style="color:#000">res</span></div>
<svg style="left:54px;top:365px" width="20" height="19" viewBox="0 0 20 19"><path d="M0.8 0.8H6.5L8.5 3H17.8V8.5H10.5V14.5H0.8Z" fill="#aab4bc"/><rect x="11" y="9.2" width="7.8" height="1.5" fill="#e6a23c"/><rect x="11" y="11.8" width="7.8" height="1.5" fill="#e6a23c"/><rect x="11" y="14.4" width="7.8" height="1.5" fill="#e6a23c"/><rect x="11" y="17" width="7.8" height="1.5" fill="#e6a23c"/></svg>
<div class="t" style="left:78px;top:359.35px;font-size:16.31px;line-height:30px;height:30px;color:#000;font-family:'Liberation Sans'"><span style="color:#000">res</span><span style="color:#8c8c8c"> (generated)</span></div>
<svg style="left:31px;top:390px" width="20" height="17" viewBox="0 0 20 17"><path d="M0.8 1H6.8L8.8 3H17.5V16H0.8Z" fill="#b2bcc4"/><path d="M8.3 6.2H12.2V4H16.2V6.2H20V17H8.3Z" fill="#fff"/><rect x="9.5" y="8" width="2.2" height="8.5" fill="#59a869"/><rect x="13" y="5.2" width="2.2" height="11.3" fill="#9aa7b0"/><rect x="16.5" y="7.5" width="2.5" height="9" fill="#40b6e0"/></svg>
<svg style="left:9px;top:392px" width="8" height="12" viewBox="0 0 8 12"><path d="M0.5 0.8L5.8 6L0.5 11.2" stroke="#6e6e6e" stroke-width="1.5" fill="none"/></svg>
<div class="t" style="left:55px;top:384.37px;font-size:16.26px;line-height:30px;height:30px;color:#000;font-family:'Liberation Sans';font-weight:bold"><span style="color:#000">jiguang</span></div>
<svg style="left:31px;top:415px" width="20" height="17" viewBox="0 0 20 17"><path d="M0.8 1H6.8L8.8 3H17.5V16H0.8Z" fill="#b2bcc4"/><path d="M8.3 6.2H12.2V4H16.2V6.2H20V17H8.3Z" fill="#fff"/><rect x="9.5" y="8" width="2.2" height="8.5" fill="#59a869"/><rect x="13" y="5.2" width="2.2" height="11.3" fill="#9aa7b0"/><rect x="16.5" y="7.5" width="2.5" height="9" fill="#40b6e0"/></svg>
<svg style="left:9px;top:417px" width="8" height="12" viewBox="0 0 8 12"><path d="M0.5 0.8L5.8 6L0.5 11.2" stroke="#6e6e6e" stroke-width="1.5" fill="none"/></svg>
<div class="t" style="left:55px;top:409.68px;font-size:15.34px;line-height:30px;height:30px;color:#000;font-family:'Liberation Sans';font-weight:bold"><span style="color:#000">o2_auth_sdk</span></div>
<svg style="left:31px;top:441px" width="19" height="14" viewBox="0 0 18.5 14"><path d="M0.3 14C0.2 9.5 2.5 5 6.5 3.2C9.5 2.2 12 3 14.2 4.6C15.5 5.4 17 4.6 17 3C17 1.6 15.6 1.2 14.2 1.6C14.6 0.2 17 -0.3 18.1 1.2C18.9 2.5 18.4 5 16.8 6.6C15.2 8.2 13.6 9.6 13.3 14H11.5C11.1 12.4 9.4 11.4 7.2 12.2L6.9 14H5.3C4.8 12.2 3 11.9 2.2 13L2 14Z" fill="#6e6e6e"/><path d="M3.6 5.8C4.8 7.8 7 8 8.4 6.6" stroke="#fff" stroke-width="0.8" fill="none" opacity="0.75"/><circle cx="11.6" cy="5.8" r="0.6" fill="#fff" opacity="0.6"/></svg>
<svg style="left:7px;top:445px" width="12" height="8" viewBox="0 0 12 8"><path d="M1 1.5L6 6.5L11 1.5" stroke="#6e6e6e" stroke-width="1.5" fill="none"/></svg>
<div class="t" style="left:55px;top:434.47px;font-size:15.97px;line-height:30px;height:30px;color:#000;font-family:'Liberation Sans'"><span style="color:#000">Gradle Scripts</span></div>
<svg style="left:54px;top:466px" width="19" height="14" viewBox="0 0 18.5 14"><path d="M0.3 14C0.2 9.5 2.5 5 6.5 3.2C9.5 2.2 12 3 14.2 4.6C15.5 5.4 17 4.6 17 3C17 1.6 15.6 1.2 14.2 1.6C14.6 0.2 17 -0.3 18.1 1.2C18.9 2.5 18.4 5 16.8 6.6C15.2 8.2 13.6 9.6 13.3 14H11.5C11.1 12.4 9.4 11.4 7.2 12.2L6.9 14H5.3C4.8 12.2 3 11.9 2.2 13L2 14Z" fill="#9aa7b0"/><path d="M3.6 5.8C4.8 7.8 7 8 8.4 6.6" stroke="#fff" stroke-width="0.8" fill="none" opacity="0.75"/><circle cx="11.6" cy="5.8" r="0.6" fill="#fff" opacity="0.6"/></svg>
<div class="t" style="left:78px;top:459.23px;font-size:16.66px;line-height:30px;height:30px;color:#000;font-family:'Liberation Sans'"><span style="color:#0033b3">build.gradle</span><span style="color:#8c8c8c"> (Project: o2oa-android)</span></div>
<svg style="left:54px;top:491px" width="19" height="14" viewBox="0 0 18.5 14"><path d="M0.3 14C0.2 9.5 2.5 5 6.5 3.2C9.5 2.2 12 3 14.2 4.6C15.5 5.4 17 4.6 17 3C17 1.6 15.6 1.2 14.2 1.6C14.6 0.2 17 -0.3 18.1 1.2C18.9 2.5 18.4 5 16.8 6.6C15.2 8.2 13.6 9.6 13.3 14H11.5C11.1 12.4 9.4 11.4 7.2 12.2L6.9 14H5.3C4.8 12.2 3 11.9 2.2 13L2 14Z" fill="#9aa7b0"/><path d="M3.6 5.8C4.8 7.8 7 8 8.4 6.6" stroke="#fff" stroke-width="0.8" fill="none" opacity="0.75"/><circle cx="11.6" cy="5.8" r="0.6" fill="#fff" opacity="0.6"/></svg>
<div class="t" style="left:78px;top:484.19px;font-size:16.77px;line-height:30px;height:30px;color:#000;font-family:'Liberation Sans'"><span style="color:#0033b3">build.gradle</span><span style="color:#8c8c8c"> (Module: o2oa-android.app)</span></div>
<svg style="left:54px;top:516px" width="19" height="14" viewBox="0 0 18.5 14"><path d="M0.3 14C0.2 9.5 2.5 5 6.5 3.2C9.5 2.2 12 3 14.2 4.6C15.5 5.4 17 4.6 17 3C17 1.6 15.6 1.2 14.2 1.6C14.6 0.2 17 -0.3 18.1 1.2C18.9 2.5 18.4 5 16.8 6.6C15.2 8.2 13.6 9.6 13.3 14H11.5C11.1 12.4 9.4 11.4 7.2 12.2L6.9 14H5.3C4.8 12.2 3 11.9 2.2 13L2 14Z" fill="#9aa7b0"/><path d="M3.6 5.8C4.8 7.8 7 8 8.4 6.6" stroke="#fff" stroke-width="0.8" fill="none" opacity="0.75"/><circle cx="11.6" cy="5.8" r="0.6" fill="#fff" opacity="0.6"/></svg>
<div class="t" style="left:78px;top:509.19px;font-size:16.76px;line-height:30px;height:30px;color:#000;font-family:'Liberation Sans'"><span style="color:#000">build.gradle</span><span style="color:#8c8c8c"> (Module: o2oa-android.jiguang)</span></div>
<svg style="left:54px;top:541px" width="19" height="14" viewBox="0 0 18.5 14"><path d="M0.3 14C0.2 9.5 2.5 5 6.5 3.2C9.5 2.2 12 3 14.2 4.6C15.5 5.4 17 4.6 17 3C17 1.6 15.6 1.2 14.2 1.6C14.6 0.2 17 -0.3 18.1 1.2C18.9 2.5 18.4 5 16.8 6.6C15.2 8.2 13.6 9.6 13.3 14H11.5C11.1 12.4 9.4 11.4 7.2 12.2L6.9 14H5.3C4.8 12.2 3 11.9 2.2 13L2 14Z" fill="#9aa7b0"/><path d="M3.6 5.8C4.8 7.8 7 8 8.4 6.6" stroke="#fff" stroke-width="0.8" fill="none" opacity="0.75"/><circle cx="11.6" cy="5.8" r="0.6" fill="#fff" opacity="0.6"/></svg>
<div class="t" style="left:78px;top:534.28px;font-size:16.5px;line-height:30px;height:30px;color:#000;font-family:'Liberation Sans'"><span style="color:#000">build.gradle</span><span style="color:#8c8c8c"> (Module: o2oa-android.o2_auth_sdk)</span></div>
<svg style="left:57px;top:564px" width="17" height="19" viewBox="0 0 17 19"><path d="M6 0H12.6V7.4H6.4V18.6H0V6H6Z" fill="#a9b3bb"/><path d="M0 4.9L4.9 0V4.9Z" fill="#a9b3bb"/><rect x="6.8" y="12.6" width="2.5" height="6" fill="#f26522"/><rect x="10.4" y="9.8" width="2.5" height="8.8" fill="#f4af3d"/><rect x="14" y="7.8" width="2.6" height="10.8" fill="#59a869"/></svg>
<div class="t" style="left:78px;top:559.25px;font-size:16.6px;line-height:30px;height:30px;color:#000;font-family:'Liberation Sans'"><span style="color:#000">gradle.properties</span><span style="color:#8c8c8c"> (Global Properties)</span></div>
<svg style="left:57px;top:589px" width="17" height="19" viewBox="0 0 17 19"><path d="M6 0H12.6V7.4H6.4V18.6H0V6H6Z" fill="#a9b3bb"/><path d="M0 4.9L4.9 0V4.9Z" fill="#a9b3bb"/><rect x="6.8" y="12.6" width="2.5" height="6" fill="#f26522"/><rect x="10.4" y="9.8" width="2.5" height="8.8" fill="#f4af3d"/><rect x="14" y="7.8" width="2.6" height="10.8" fill="#59a869"/></svg>
<div class="t" style="left:78px;top:584.23px;font-size:16.64px;line-height:30px;height:30px;color:#000;font-family:'Liberation Sans'"><span style="color:#0033b3">gradle-wrapper.properties</span><span style="color:#8c8c8c"> (Gradle Version)</span></div>
<svg style="left:58px;top:614px" width="13" height="18" viewBox="0 0 13 18"><path d="M6 0H12.5V18H0V6H6Z" fill="#a9b3bb"/><path d="M0 4.9L4.9 0V4.9Z" fill="#a9b3bb"/><rect x="2.4" y="8" width="7.8" height="1.2" fill="#3c3f41"/><rect x="2.4" y="10.7" width="7.8" height="1.2" fill="#3c3f41"/><rect x="2.4" y="13.3" width="5.4" height="1.2" fill="#3c3f41"/></svg>
<div class="t" style="left:78px;top:609.28px;font-size:16.5px;line-height:30px;height:30px;color:#000;font-family:'Liberation Sans'"><span style="color:#000">multidex_keep_file.pro</span><span style="color:#8c8c8c"> (ProGuard Rules for o2oa-android.app)</span></div>
<svg style="left:58px;top:639px" width="13" height="18" viewBox="0 0 13 18"><path d="M6 0H12.5V18H0V6H6Z" fill="#a9b3bb"/><path d="M0 4.9L4.9 0V4.9Z" fill="#a9b3bb"/><rect x="2.4" y="8" width="7.8" height="1.2" fill="#3c3f41"/><rect x="2.4" y="10.7" width="7.8" height="1.2" fill="#3c3f41"/><rect x="2.4" y="13.3" width="5.4" height="1.2" fill="#3c3f41"/></svg>
<div class="t" style="left:78px;top:634.30px;font-size:16.46px;line-height:30px;height:30px;color:#000;font-family:'Liberation Sans'"><span style="color:#000">proguard-rules.pro</span><span style="color:#8c8c8c"> (ProGuard Rules for o2oa-android.app)</span></div>
<svg style="left:58px;top:664px" width="13" height="18" viewBox="0 0 13 18"><path d="M6 0H12.5V18H0V6H6Z" fill="#a9b3bb"/><path d="M0 4.9L4.9 0V4.9Z" fill="#a9b3bb"/><rect x="2.4" y="8" width="7.8" height="1.2" fill="#3c3f41"/><rect x="2.4" y="10.7" width="7.8" height="1.2" fill="#3c3f41"/><rect x="2.4" y="13.3" width="5.4" height="1.2" fill="#3c3f41"/></svg>
<div class="t" style="left:78px;top:659.28px;font-size:16.5px;line-height:30px;height:30px;color:#000;font-family:'Liberation Sans'"><span style="color:#000">consumer-rules.pro</span><span style="color:#8c8c8c"> (ProGuard Rules for o2oa-android.jiguang)</span></div>
<svg style="left:58px;top:689px" width="13" height="18" viewBox="0 0 13 18"><path d="M6 0H12.5V18H0V6H6Z" fill="#a9b3bb"/><path d="M0 4.9L4.9 0V4.9Z" fill="#a9b3bb"/><rect x="2.4" y="8" width="7.8" height="1.2" fill="#3c3f41"/><rect x="2.4" y="10.7" width="7.8" height="1.2" fill="#3c3f41"/><rect x="2.4" y="13.3" width="5.4" height="1.2" fill="#3c3f41"/></svg>
<div class="t" style="left:78px;top:684.28px;font-size:16.5px;line-height:30px;height:30px;color:#000;font-family:'Liberation Sans'"><span style="color:#000">proguard-rules.pro</span><span style="color:#8c8c8c"> (ProGuard Rules for o2oa-android.jiguang)</span></div>
<svg style="left:58px;top:714px" width="13" height="18" viewBox="0 0 13 18"><path d="M6 0H12.5V18H0V6H6Z" fill="#a9b3bb"/><path d="M0 4.9L4.9 0V4.9Z" fill="#a9b3bb"/><rect x="2.4" y="8" width="7.8" height="1.2" fill="#3c3f41"/><rect x="2.4" y="10.7" width="7.8" height="1.2" fill="#3c3f41"/><rect x="2.4" y="13.3" width="5.4" height="1.2" fill="#3c3f41"/></svg>
<div class="t" style="left:78px;top:709.28px;font-size:16.5px;line-height:30px;height:30px;color:#000;font-family:'Liberation Sans'"><span style="color:#000">proguard-rules.pro</span><span style="color:#8c8c8c"> (ProGuard Rules for o2oa-android.o2_auth_sdk)</span></div>
<svg style="left:57px;top:739px" width="17" height="19" viewBox="0 0 17 19"><path d="M6 0H12.6V7.4H6.4V18.6H0V6H6Z" fill="#a9b3bb"/><path d="M0 4.9L4.9 0V4.9Z" fill="#a9b3bb"/><rect x="6.8" y="12.6" width="2.5" height="6" fill="#f26522"/><rect x="10.4" y="9.8" width="2.5" height="8.8" fill="#f4af3d"/><rect x="14" y="7.8" width="2.6" height="10.8" fill="#59a869"/></svg>
<div class="t" style="left:78px;top:734.22px;font-size:16.68px;line-height:30px;height:30px;color:#000;font-family:'Liberation Sans'"><span style="color:#0033b3">gradle.properties</span><span style="color:#8c8c8c"> (Project Properties)</span></div>
<svg style="left:54px;top:766px" width="19" height="14" viewBox="0 0 18.5 14"><path d="M0.3 14C0.2 9.5 2.5 5 6.5 3.2C9.5 2.2 12 3 14.2 4.6C15.5 5.4 17 4.6 17 3C17 1.6 15.6 1.2 14.2 1.6C14.6 0.2 17 -0.3 18.1 1.2C18.9 2.5 18.4 5 16.8 6.6C15.2 8.2 13.6 9.6 13.3 14H11.5C11.1 12.4 9.4 11.4 7.2 12.2L6.9 14H5.3C4.8 12.2 3 11.9 2.2 13L2 14Z" fill="#9aa7b0"/><path d="M3.6 5.8C4.8 7.8 7 8 8.4 6.6" stroke="#fff" stroke-width="0.8" fill="none" opacity="0.75"/><circle cx="11.6" cy="5.8" r="0.6" fill="#fff" opacity="0.6"/></svg>
<div class="t" style="left:78px;top:759.28px;font-size:16.5px;line-height:30px;height:30px;color:#000;font-family:'Liberation Sans'"><span style="color:#000">settings.gradle</span><span style="color:#8c8c8c"> (Project Settings)</span></div>
<svg style="left:57px;top:789px" width="17" height="19" viewBox="0 0 17 19"><path d="M6 0H12.6V7.4H6.4V18.6H0V6H6Z" fill="#a9b3bb"/><path d="M0 4.9L4.9 0V4.9Z" fill="#a9b3bb"/><rect x="6.8" y="12.6" width="2.5" height="6" fill="#f26522"/><rect x="10.4" y="9.8" width="2.5" height="8.8" fill="#f4af3d"/><rect x="14" y="7.8" width="2.6" height="10.8" fill="#59a869"/></svg>
<div class="t" style="left:78px;top:784.36px;font-size:16.27px;line-height:30px;height:30px;color:#000;font-family:'Liberation Sans'"><span style="color:#827d25">local.properties</span><span style="color:#8c8c8c"> (SDK Location)</span></div>
</div>
<div class="a" style="left:546px;top:333px;width:75px;height:29px;background:#fcfaed;"></div>
<div class="a" style="left:622px;top:333px;width:1264px;height:29px;background:#fcfaed;"></div>
<div class="a" style="left:1630px;top:333px;width:1px;height:29px;background:#e8e6d8;"></div>
<div class="t" style="left:562px;top:74.22px;font-size:16.667px;line-height:30px;height:30px;color:#999999;font-family:'Liberation Mono'">1</div>
<div class="t" style="left:630px;top:74.11px;font-size:17px;line-height:30px;height:30px;color:#000;font-family:'Liberation Mono';letter-spacing:-0.2px;transform:scaleY(1.12);transform-origin:0 20.89px"><span style="color:#8c8c8c;font-style:italic">## This file must *NOT* be checked into Version Control Systems,</span></div>
<div class="t" style="left:562px;top:103.22px;font-size:16.667px;line-height:30px;height:30px;color:#999999;font-family:'Liberation Mono'">2</div>
<div class="t" style="left:630px;top:103.11px;font-size:17px;line-height:30px;height:30px;color:#000;font-family:'Liberation Mono';letter-spacing:-0.2px;transform:scaleY(1.12);transform-origin:0 20.89px"><span style="color:#8c8c8c;font-style:italic"># as it contains information specific to your local configuration.</span></div>
<div class="t" style="left:562px;top:132.22px;font-size:16.667px;line-height:30px;height:30px;color:#999999;font-family:'Liberation Mono'">3</div>
<div class="t" style="left:630px;top:132.11px;font-size:17px;line-height:30px;height:30px;color:#000;font-family:'Liberation Mono';letter-spacing:-0.2px;transform:scaleY(1.12);transform-origin:0 20.89px"><span style="color:#8c8c8c;font-style:italic">#</span></div>
<div class="t" style="left:562px;top:161.22px;font-size:16.667px;line-height:30px;height:30px;color:#999999;font-family:'Liberation Mono'">4</div>
<div class="t" style="left:630px;top:161.11px;font-size:17px;line-height:30px;height:30px;color:#000;font-family:'Liberation Mono';letter-spacing:-0.2px;transform:scaleY(1.12);transform-origin:0 20.89px"><span style="color:#8c8c8c;font-style:italic"># Location of the SDK. This is only used by Gradle.</span></div>
<div class="t" style="left:562px;top:190.22px;font-size:16.667px;line-height:30px;height:30px;color:#999999;font-family:'Liberation Mono'">5</div>
<div class="t" style="left:630px;top:190.11px;font-size:17px;line-height:30px;height:30px;color:#000;font-family:'Liberation Mono';letter-spacing:-0.2px;transform:scaleY(1.12);transform-origin:0 20.89px"><span style="color:#8c8c8c;font-style:italic"># For customization when using a Version Control System, please read the</span></div>
<div class="t" style="left:562px;top:219.22px;font-size:16.667px;line-height:30px;height:30px;color:#999999;font-family:'Liberation Mono'">6</div>
<div class="t" style="left:630px;top:219.11px;font-size:17px;line-height:30px;height:30px;color:#000;font-family:'Liberation Mono';letter-spacing:-0.2px;transform:scaleY(1.12);transform-origin:0 20.89px"><span style="color:#8c8c8c;font-style:italic"># header note.</span></div>
<div class="t" style="left:562px;top:248.22px;font-size:16.667px;line-height:30px;height:30px;color:#999999;font-family:'Liberation Mono'">7</div>
<div class="t" style="left:630px;top:248.11px;font-size:17px;line-height:30px;height:30px;color:#000;font-family:'Liberation Mono';letter-spacing:-0.2px;transform:scaleY(1.12);transform-origin:0 20.89px"><span style="color:#8c8c8c;font-style:italic">#Fri Nov 11 16:25:30 CST 2022</span></div>
<div class="t" style="left:562px;top:277.22px;font-size:16.667px;line-height:30px;height:30px;color:#999999;font-family:'Liberation Mono'">8</div>
<div class="t" style="left:630px;top:277.11px;font-size:17px;line-height:30px;height:30px;color:#000;font-family:'Liberation Mono';letter-spacing:-0.2px;transform:scaleY(1.12);transform-origin:0 20.89px"><span style="color:#0033b3">sdk.dir</span><span style="color:#000">=</span><span style="color:#067d17">D</span><span style="color:#0033b3">\:</span><span style="color:#0033b3">\\</span><span style="color:#067d17">sdk</span></div>
<div class="t" style="left:562px;top:306.22px;font-size:16.667px;line-height:30px;height:30px;color:#999999;font-family:'Liberation Mono'">9</div>
<div class="t" style="left:630px;top:306.11px;font-size:17px;line-height:30px;height:30px;color:#000;font-family:'Liberation Mono';letter-spacing:-0.2px;transform:scaleY(1.12);transform-origin:0 20.89px"><span style="color:#808080">signingConfig.keyAlias</span><span style="color:#000">=</span><span style="color:#067d17">dhcc</span></div>
<div class="t" style="left:552px;top:335.22px;font-size:16.667px;line-height:30px;height:30px;color:#999999;font-family:'Liberation Mono'">10</div>
<div class="t" style="left:630px;top:335.11px;font-size:17px;line-height:30px;height:30px;color:#000;font-family:'Liberation Mono';letter-spacing:-0.2px;transform:scaleY(1.12);transform-origin:0 20.89px"><span style="color:#808080">signingConfig.keyPassword</span><span style="color:#000">=</span><span style="color:#067d17">123456</span></div>
<div class="t" style="left:552px;top:364.22px;font-size:16.667px;line-height:30px;height:30px;color:#999999;font-family:'Liberation Mono'">11</div>
<div class="t" style="left:630px;top:364.11px;font-size:17px;line-height:30px;height:30px;color:#000;font-family:'Liberation Mono';letter-spacing:-0.2px;transform:scaleY(1.12);transform-origin:0 20.89px"><span style="color:#808080">signingConfig.storeFilePath</span><span style="color:#000">=</span><span style="color:#067d17">D</span><span style="color:#0033b3">\:\\</span><span style="color:#067d17">android</span><span style="color:#0033b3">\\</span><span style="color:#067d17">o2oa-android</span><span style="color:#0033b3">\\</span><span style="color:#067d17">dhcc1234.jks</span></div>
<div class="t" style="left:552px;top:393.22px;font-size:16.667px;line-height:30px;height:30px;color:#999999;font-family:'Liberation Mono'">12</div>
<div class="t" style="left:630px;top:393.11px;font-size:17px;line-height:30px;height:30px;color:#000;font-family:'Liberation Mono';letter-spacing:-0.2px;transform:scaleY(1.12);transform-origin:0 20.89px"><span style="color:#808080">signingConfig.storePassword</span><span style="color:#000">=</span><span style="color:#067d17">123456</span></div>
<div class="t" style="left:552px;top:422.22px;font-size:16.667px;line-height:30px;height:30px;color:#999999;font-family:'Liberation Mono'">13</div>
<div class="t" style="left:630px;top:422.11px;font-size:17px;line-height:30px;height:30px;color:#000;font-family:'Liberation Mono';letter-spacing:-0.2px;transform:scaleY(1.12);transform-origin:0 20.89px"><span style="color:#808080">JPUSH_APPKEY</span><span style="color:#000">=</span><span style="color:#067d17">d9f6c32b3ce562ae7f938199</span></div>
<div class="t" style="left:552px;top:451.22px;font-size:16.667px;line-height:30px;height:30px;color:#999999;font-family:'Liberation Mono'">14</div>
<svg style="left:1796px;top:83px" width="15" height="13" viewBox="0 0 15 13"><path d="M7.5 0L15 13H0Z" fill="#f2c00b"/><rect x="6.6" y="4" width="1.8" height="5" fill="#fff"/><rect x="6.6" y="10" width="1.8" height="1.8" fill="#fff"/></svg>
<div class="t" style="left:1814px;top:75.63px;font-size:15.5px;line-height:30px;height:30px;color:#6e6e6e;font-family:'Liberation Sans'">5</div>
<svg style="left:1837px;top:86px" width="11" height="7" viewBox="0 0 11 7"><path d="M0.7 6L5.5 1.2L10.3 6" stroke="#6e6e6e" stroke-width="1.4" fill="none"/></svg>
<svg style="left:1865px;top:86px" width="11" height="7" viewBox="0 0 11 7"><path d="M0.7 1L5.5 5.8L10.3 1" stroke="#6e6e6e" stroke-width="1.4" fill="none"/></svg>
<div class="a" style="left:1868px;top:342px;width:17px;height:2px;background:#f2c00b;"></div>
<div class="a" style="left:1868px;top:371px;width:17px;height:2px;background:#f2c00b;"></div>
<div class="a" style="left:1868px;top:400px;width:17px;height:2px;background:#f2c00b;"></div>
<div class="a" style="left:1868px;top:429px;width:17px;height:2px;background:#f2c00b;"></div>
<div class="a" style="left:1868px;top:458px;width:17px;height:2px;background:#f2c00b;"></div>
<div class="t" style="left:26.6px;top:903.30px;font-size:16.44px;line-height:30px;height:30px;color:#000;font-family:'Liberation Sans'">Logcat</div>
<div class="a" style="left:19px;top:936px;width:1867px;height:28px;overflow:hidden">
<div class="a" style="left:10px;top:10px;width:291px;height:40px;background:#fff;border:1px solid #c4c4c4;border-radius:4px"></div>
<div class="t" style="left:18px;top:11.28px;font-size:16.5px;line-height:30px;height:30px;color:#d43a3a;font-family:'Liberation Sans'">No connected devices</div>
<svg style="left:281px;top:24px" width="11" height="6" viewBox="0 0 11 6"><path d="M0 0H11L5.5 6Z" fill="#6e6e6e"/></svg>
<div class="a" style="left:315px;top:10px;width:291px;height:40px;background:#fff;border:1px solid #c4c4c4;border-radius:4px"></div>
<div class="t" style="left:322px;top:11.28px;font-size:16.5px;line-height:30px;height:30px;color:#d43a3a;font-family:'Liberation Sans'">No debuggable processes</div>
<svg style="left:586px;top:24px" width="11" height="6" viewBox="0 0 11 6"><path d="M0 0H11L5.5 6Z" fill="#6e6e6e"/></svg>
<div class="a" style="left:626px;top:10px;width:127px;height:40px;background:#fff;border:1px solid #c4c4c4;border-radius:4px"></div>
<div class="t" style="left:632px;top:11.28px;font-size:16.5px;line-height:30px;height:30px;color:#000;font-family:'Liberation Sans'">Error</div>
<svg style="left:733px;top:24px" width="11" height="6" viewBox="0 0 11 6"><path d="M0 0H11L5.5 6Z" fill="#6e6e6e"/></svg>
<div class="a" style="left:767px;top:10px;width:760px;height:40px;background:#fff;border:1px solid #c4c4c4;border-radius:4px"></div>
<svg style="left:777px;top:18px" width="22" height="14" viewBox="0 0 22 14"><circle cx="7.3" cy="6.8" r="5.3" stroke="#6f7b85" stroke-width="1.3" fill="none"/><path d="M11.8 9.5H16.5L14.15 12Z" fill="#6f7b85"/></svg>
<div class="a" style="left:1511px;top:0px;width:56px;height:28px;background:#e6e6e6;"></div>
<div class="a" style="left:1525px;top:18px;width:17px;height:17px;background:#4c8fe0;border-radius:2px"></div>
<svg style="left:1527px;top:20px" width="13" height="10" viewBox="0 0 13 10"><path d="M1 5L5 9L12 1.5" stroke="#fff" stroke-width="2" fill="none"/></svg>
<div class="a" style="left:1566px;top:10px;width:291px;height:40px;background:#fff;border:1px solid #c4c4c4;border-radius:4px"></div>
<div class="t" style="left:1573px;top:11.28px;font-size:16.5px;line-height:30px;height:30px;color:#000;font-family:'Liberation Sans'">Show only selected application</div>
<svg style="left:1837px;top:24px" width="11" height="6" viewBox="0 0 11 6"><path d="M0 0H11L5.5 6Z" fill="#6e6e6e"/></svg>
</div>
<div class="a" style="left:360px;top:965px;width:86px;height:26px;background:#bdbdbd;"></div>
<svg style="left:31px;top:969px" width="12" height="18" viewBox="0 0 12 18"><circle cx="2.5" cy="2.5" r="1.8" fill="#6e6e6e"/><circle cx="2.5" cy="15.5" r="1.8" fill="#6e6e6e"/><circle cx="10" cy="4.5" r="1.8" fill="#6e6e6e"/><path d="M2.5 2.5V15.5M10 4.5C10 10 2.5 9 2.5 14" stroke="#6e6e6e" stroke-width="1.6" fill="none"/></svg>
<div class="t" style="left:49.3px;top:963.18px;font-size:13.91px;line-height:30px;height:30px;color:#000;font-family:'Liberation Sans'">Git</div>
<svg style="left:92px;top:971px" width="13" height="12" viewBox="0 0 13 12"><rect x="0" y="0" width="2" height="2" fill="#6e6e6e"/><rect x="3.5" y="0" width="9.5" height="2" fill="#6e6e6e"/><rect x="0" y="5" width="2" height="2" fill="#6e6e6e"/><rect x="3.5" y="5" width="9.5" height="2" fill="#6e6e6e"/><rect x="0" y="10" width="2" height="2" fill="#6e6e6e"/><rect x="3.5" y="10" width="9.5" height="2" fill="#6e6e6e"/></svg>
<div class="t" style="left:109.8px;top:963.34px;font-size:13.45px;line-height:30px;height:30px;color:#000;font-family:'Liberation Sans'">TODO</div>
<svg style="left:176px;top:971px" width="13" height="13" viewBox="0 0 13 13"><circle cx="6.5" cy="6.5" r="6.5" fill="#6e6e6e"/><rect x="5.5" y="2.5" width="2" height="5.5" fill="#f2f2f2"/><rect x="5.5" y="9.3" width="2" height="2" fill="#f2f2f2"/></svg>
<div class="t" style="left:194.6px;top:963.39px;font-size:13.3px;line-height:30px;height:30px;color:#000;font-family:'Liberation Sans'">Problems</div>
<svg style="left:276px;top:971px" width="14" height="13" viewBox="0 0 14 13"><rect width="14" height="13" fill="#6e6e6e"/><path d="M3 3L6.5 6L3 9" stroke="#f2f2f2" stroke-width="1.3" fill="none"/><rect x="7.5" y="9.5" width="4" height="1.2" fill="#f2f2f2"/></svg>
<div class="t" style="left:295.2px;top:963.27px;font-size:13.65px;line-height:30px;height:30px;color:#000;font-family:'Liberation Sans'">Terminal</div>
<svg style="left:373px;top:973px" width="14" height="11" viewBox="0 0 14 11"><rect x="0" y="0" width="13" height="2" fill="#6e6e6e"/><rect x="0" y="4.5" width="9" height="2" fill="#6e6e6e"/><rect x="0" y="9" width="11" height="2" fill="#6e6e6e"/></svg>
<div class="t" style="left:392.5px;top:963.28px;font-size:13.61px;line-height:30px;height:30px;color:#000;font-family:'Liberation Sans'">Logcat</div>
<svg style="left:462px;top:970px" width="14" height="16" viewBox="0 0 14 16"><path d="M3 1.5C3 0.5 11 0.5 11 1.5V7C11 10 3 10 3 7Z" fill="#6e6e6e"/><path d="M1 6H13M1 10H13" stroke="#6e6e6e" stroke-width="1.5"/><path d="M3 9L2 15H12L11 9Z" fill="#6e6e6e"/></svg>
<div class="t" style="left:481.4px;top:963.18px;font-size:13.91px;line-height:30px;height:30px;color:#000;font-family:'Liberation Sans'">App Inspection</div>
<svg style="left:600px;top:972px" width="15" height="12" viewBox="0 0 15 12"><path d="M1.2 11A6.5 6.5 0 0 1 13.8 11" stroke="#6e6e6e" stroke-width="2" fill="none"/><path d="M6.5 11L10.5 4.5L8.5 11.5Z" fill="#6e6e6e"/></svg>
<div class="t" style="left:620.5px;top:963.28px;font-size:13.63px;line-height:30px;height:30px;color:#000;font-family:'Liberation Sans'">Profiler</div>
<svg style="left:1638px;top:970px" width="16" height="17" viewBox="0 0 16 17"><path d="M8 0A8 8 0 1 0 16 8V17H8" fill="#59a869"/><circle cx="8" cy="8" r="8" fill="#59a869"/></svg>
<div class="t" style="left:1642px;top:963.84px;font-size:12px;line-height:30px;height:30px;color:#fff;font-family:'Liberation Sans';font-weight:bold">1</div>
<div class="t" style="left:1658.4px;top:963.38px;font-size:13.32px;line-height:30px;height:30px;color:#000;font-family:'Liberation Sans'">Event Log</div>
<svg style="left:1747px;top:969px" width="17" height="17" viewBox="0 0 17 17"><path d="M0.5 0.5H11V3M0.5 0.5V9H3" stroke="#6e6e6e" stroke-width="1.2" fill="none"/><path d="M3 3.5H13.5V6M3 3.5V12H6" stroke="#6e6e6e" stroke-width="1.2" fill="none"/><circle cx="11" cy="11" r="3.2" stroke="#6e6e6e" stroke-width="1.4" fill="none"/><path d="M13.2 13.2L16.5 16.5" stroke="#6e6e6e" stroke-width="1.8"/></svg>
<div class="t" style="left:1767.1px;top:963.13px;font-size:14.06px;line-height:30px;height:30px;color:#000;font-family:'Liberation Sans'">Layout Inspector</div>
<div class="a" style="left:2px;top:996px;width:12px;height:1px;background:#a0a0a0;"></div>
<div class="a" style="left:1449px;top:876px;width:429px;height:78px;background:#f2f2f2;border:1px solid #d6d6d6;border-radius:3px;box-shadow:0 2px 10px rgba(0,0,0,0.18)"></div>
<svg style="left:1463px;top:891px" width="18" height="18" viewBox="0 0 18 18"><circle cx="9" cy="9" r="9" fill="#389fd6"/><rect x="7.9" y="7.5" width="2.2" height="6.5" fill="#fff"/><circle cx="9" cy="4.8" r="1.3" fill="#fff"/></svg>
<div class="t" style="left:1489.5px;top:885.43px;font-size:16.07px;line-height:30px;height:30px;color:#000;font-family:'Liberation Sans';font-weight:bold">Project update recommended</div>
<div class="t" style="left:1489.5px;top:911.33px;font-size:16.37px;line-height:30px;height:30px;color:#000;font-family:'Liberation Sans'">Android Gradle Plugin can be <span style="color:#2f7fd8">upgraded</span>.</div>
<div class="vt" style="left:-4.29px;top:91px;font-size:13.82px;line-height:20px;transform:rotate(-90deg);color:#000">Project</div>
<svg style="left:0px;top:98px" width="12" height="12" viewBox="0 0 12 12"><path d="M0 0H5L6.5 2H13V12H0Z" fill="#6e6e6e" transform="rotate(0)"/></svg>
<div class="vt" style="left:-4.25px;top:253.5px;font-size:13.70px;line-height:20px;transform:rotate(-90deg);color:#000">Resource Manager</div>
<svg style="left:1px;top:259px" width="14" height="18" viewBox="0 0 14 18"><path d="M7 0L11 5H3Z" fill="#6e6e6e"/><rect x="0" y="8" width="6" height="6" fill="#6e6e6e"/><circle cx="10" cy="11" r="3.5" fill="#6e6e6e"/></svg>
<div class="vt" style="left:-4.37px;top:683px;font-size:14.05px;line-height:20px;transform:rotate(-90deg);color:#000">Structure</div>
<svg style="left:1px;top:690px" width="12" height="12" viewBox="0 0 12 12"><rect x="6" y="0" width="5" height="5" fill="#6e6e6e"/><rect x="0" y="6.5" width="5" height="5" fill="#6e6e6e"/><rect x="6" y="6.5" width="5" height="5" fill="#6e6e6e"/></svg>
<div class="vt" style="left:-4.25px;top:798.6px;font-size:13.72px;line-height:20px;transform:rotate(-90deg);color:#000">Bookmarks</div>
<svg style="left:0px;top:804px" width="12" height="14" viewBox="0 0 12 14"><path d="M0 0H11V13.5L5.5 9L0 13.5Z" fill="#6e6e6e"/></svg>
<div class="vt" style="left:-4.22px;top:929px;font-size:13.62px;line-height:20px;transform:rotate(-90deg);color:#000">Build Variants</div>
<svg style="left:-4px;top:936.5px" width="16" height="10" viewBox="0 0 16 11"><path d="M0 10.5C0.3 6.3 3.5 3.4 8 3.4C12.5 3.4 15.7 6.3 16 10.5Z" fill="#6e6e6e"/><path d="M3.6 5.2L1.8 0.8M12.4 5.2L14.2 0.8" stroke="#6e6e6e" stroke-width="1.3"/><circle cx="4.8" cy="7.5" r="0.9" fill="#fff"/><circle cx="11.2" cy="7.5" r="0.9" fill="#fff"/></svg>
<svg style="left:1890px;top:50px" width="18" height="13" viewBox="0 0 18.5 14"><path d="M0.3 14C0.2 9.5 2.5 5 6.5 3.2C9.5 2.2 12 3 14.2 4.6C15.5 5.4 17 4.6 17 3C17 1.6 15.6 1.2 14.2 1.6C14.6 0.2 17 -0.3 18.1 1.2C18.9 2.5 18.4 5 16.8 6.6C15.2 8.2 13.6 9.6 13.3 14H11.5C11.1 12.4 9.4 11.4 7.2 12.2L6.9 14H5.3C4.8 12.2 3 11.9 2.2 13L2 14Z" fill="#6e6e6e"/><path d="M3.6 5.8C4.8 7.8 7 8 8.4 6.6" stroke="#fff" stroke-width="0.8" fill="none" opacity="0.75"/><circle cx="11.6" cy="5.8" r="0.6" fill="#fff" opacity="0.6"/></svg>
<div class="vt" style="left:1909.39px;top:70px;font-size:12.66px;line-height:20px;transform:rotate(90deg);color:#000">Gradle</div>
<svg style="left:1892px;top:137px" width="16" height="15" viewBox="0 0 16 15"><rect x="0.7" y="0.7" width="9" height="12" rx="1" stroke="#6e6e6e" stroke-width="1.3" fill="none"/><rect x="7" y="5" width="8" height="9.5" rx="1" stroke="#6e6e6e" stroke-width="1.3" fill="#f2f2f2"/></svg>
<div class="vt" style="left:1909.76px;top:155px;font-size:13.73px;line-height:20px;transform:rotate(90deg);color:#000">Device Manager</div>
<svg style="left:1893px;top:709px" width="13" height="16" viewBox="0 0 13 16"><rect x="0.7" y="0.7" width="11" height="14" rx="1.2" stroke="#6e6e6e" stroke-width="1.4" fill="none"/><rect x="0.7" y="11" width="11" height="3.7" fill="#6e6e6e"/></svg>
<div class="vt" style="left:1909.63px;top:729px;font-size:13.36px;line-height:20px;transform:rotate(90deg);color:#000">Device File Explorer</div>
<svg style="left:1892px;top:877px" width="16" height="17" viewBox="0 0 16 17"><path d="M12 4V0.7H0.7V13H6" stroke="#6e6e6e" stroke-width="1.4" fill="none"/><rect x="8" y="6" width="7" height="6" stroke="#6e6e6e" stroke-width="1.3" fill="none"/><rect x="7" y="14.5" width="9" height="1.3" fill="#6e6e6e"/></svg>
<div class="vt" style="left:1909.94px;top:895px;font-size:14.25px;line-height:20px;transform:rotate(90deg);color:#000">Emulator</div>
</body></html>
